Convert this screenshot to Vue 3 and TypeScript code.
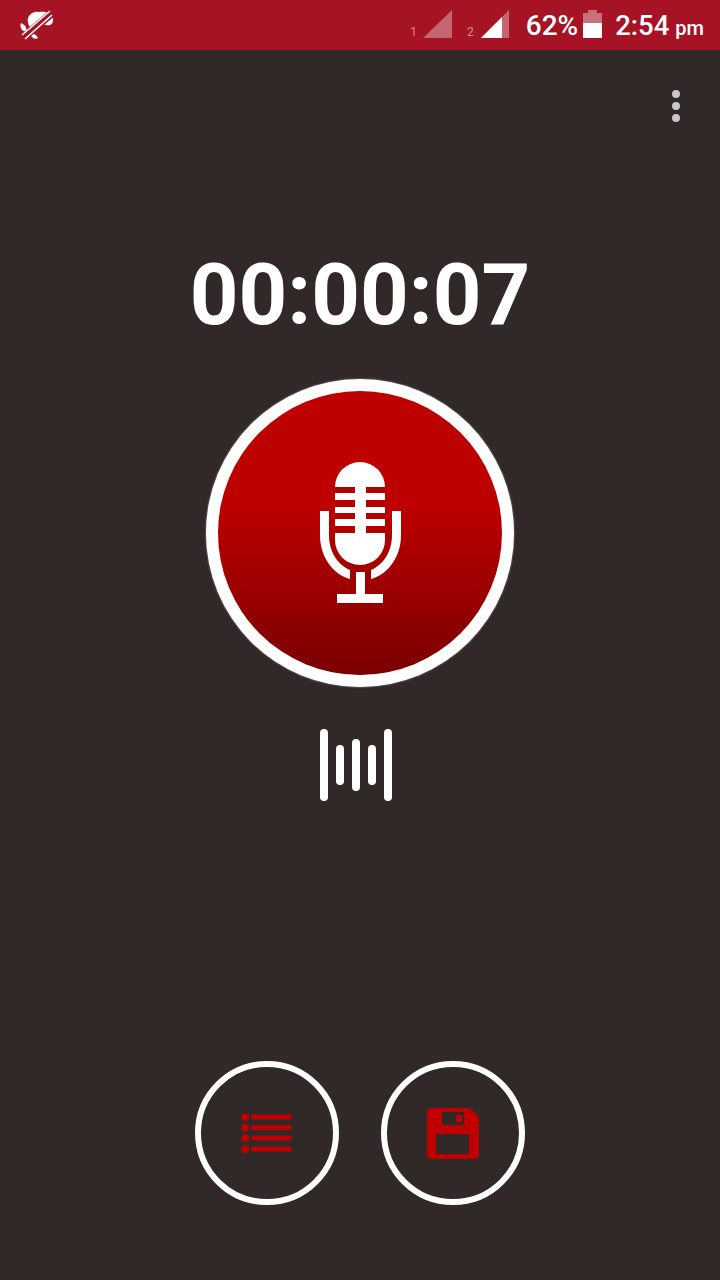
<script setup lang="ts">
const bars = [72, 40, 52, 40, 72]
</script>

<template>
  <div class="screen">
    <div class="status-bar">
      <svg class="mute-icon" width="40" height="40" viewBox="0 0 40 40">
        <path d="M9 12 C11 7 16 5 20 6 C25 5 31 6 33 10 C35 14 34 18 31 19 C28 20 26 18 24 19 C20 22 16 24 13 23 C10 21 8 16 9 12 Z" fill="#fff" />
        <path d="M2 17 C5 18 8 21 8 26 C4 26 0 22 2 17 Z M11 27 C14 27 18 29 19 32 C16 34 12 32 11 27 Z" fill="#fff" />
        <path d="M33 7 L4 32" stroke="#a51324" stroke-width="8" />
        <path d="M31 5 L3 29 M33 9 L6 33" stroke="#fff" stroke-width="1.6" />
      </svg>
      <div class="status-right">
        <span class="sim">1</span>
        <svg class="signal" width="29" height="28" viewBox="0 0 29 28">
          <path d="M0 28 L29 0 V28 Z" fill="#fff" opacity="0.35" />
        </svg>
        <span class="sim sim-two">2</span>
        <svg class="signal" width="28" height="28" viewBox="0 0 28 28">
          <path d="M0 28 L28 0 V28 Z" fill="#fff" opacity="0.35" />
          <path d="M0 28 L21 7 V28 Z" fill="#fff" />
        </svg>
        <span class="percent">62%</span>
        <svg class="battery" width="19" height="28" viewBox="0 0 19 28">
          <path d="M5 0 H14 V3 H19 V13 H0 V3 H5 Z" fill="#fff" opacity="0.4" />
          <rect x="0" y="13" width="19" height="15" fill="#fff" />
        </svg>
        <span class="clock">2:54<small>pm</small></span>
      </div>
    </div>

    <div class="menu-row">
      <div class="menu-dots">
        <i></i><i></i><i></i>
      </div>
    </div>

    <div class="timer">00:00:07</div>

    <div class="record-ring">
      <div class="record-btn">
        <svg width="82" height="142" viewBox="-1 0 82 142">
          <rect x="15" y="0" width="50" height="103" rx="25" fill="#fff" />
          <g fill="#b50000">
            <rect x="15" y="25" width="20" height="6" />
            <rect x="46" y="25" width="19" height="6" />
            <rect x="15" y="38" width="20" height="7" />
            <rect x="46" y="38" width="19" height="7" />
            <rect x="15" y="51" width="20" height="6" />
            <rect x="46" y="51" width="19" height="6" />
            <rect x="15" y="64" width="20" height="7" />
            <rect x="46" y="64" width="19" height="7" />
          </g>
          <path d="M0 49 H9 V73 C9 90 18 103 30 108 V117 C12 112 0 94 0 73 Z" fill="#fff" />
          <path d="M81 49 H72 V73 C72 90 63 103 51 108 V117 C69 112 81 94 81 73 Z" fill="#fff" />
          <rect x="36" y="110" width="9" height="23" fill="#fff" />
          <rect x="17" y="132" width="46" height="9" fill="#fff" />
        </svg>
      </div>
    </div>

    <div class="bars">
      <span v-for="(h, i) in bars" :key="i" class="bar" :style="{ height: h + 'px' }"></span>
    </div>

    <div class="actions">
      <div class="round-btn">
        <svg width="52" height="40" viewBox="0 0 52 40">
          <g fill="#c00000">
            <rect x="0.5" y="0.5" width="7.5" height="7.5" rx="3" />
            <rect x="0.5" y="11" width="7.5" height="7.5" rx="3" />
            <rect x="0.5" y="21.5" width="7.5" height="7.5" rx="3" />
            <rect x="0.5" y="32.5" width="7.5" height="7.5" rx="3" />
            <rect x="10" y="1.5" width="41" height="5" rx="2" />
            <rect x="10" y="12" width="41" height="5" rx="2" />
            <rect x="10" y="22.5" width="41" height="5" rx="2" />
            <rect x="10" y="33.5" width="41" height="5" rx="2" />
          </g>
        </svg>
      </div>
      <div class="round-btn">
        <svg width="52" height="51" viewBox="0 0 52 51">
          <path fill="#c00000" fill-rule="evenodd" d="M4 0 H42 C47 3 50 6 52 10 V47 C52 49 50 51 48 51 H4 C2 51 0 49 0 47 V4 C0 2 2 0 4 0 Z M15 4 V17 H37 V4 Z M9 26 V46 H42 V26 Z" />
          <rect x="29" y="7" width="6" height="7" fill="#c00000" />
        </svg>
      </div>
    </div>
  </div>
</template>

<style scoped>
.screen {
  width: 720px;
  height: 1280px;
  background: #312828;
  display: flex;
  flex-direction: column;
  align-items: center;
  font-family: Roboto, "Liberation Sans", sans-serif;
  color: #fff;
  overflow: hidden;
}

.status-bar {
  width: 100%;
  height: 50px;
  background: #a51324;
  display: flex;
  align-items: center;
  justify-content: space-between;
  box-sizing: border-box;
  padding: 0 16px 0 19px;
}
.mute-icon {
  display: block;
  margin-top: 2px;
}
.status-right {
  display: flex;
  align-items: flex-end;
  height: 28px;
  margin-top: -2px;
}
.sim {
  font-size: 12px;
  line-height: 12px;
  color: rgba(255, 255, 255, 0.5);
  margin-right: 6px;
}
.sim-two {
  margin-left: 15px;
  margin-right: 7px;
}
.signal,
.battery {
  display: block;
}
.percent {
  font-size: 28px;
  font-weight: 500;
  line-height: 28px;
  margin: 0 5px -2px 17px;
}
.clock {
  font-size: 27.5px;
  font-weight: 500;
  line-height: 28px;
  margin: 0 0 -2px 13px;
  white-space: nowrap;
}
.clock small {
  font-size: 20px;
  line-height: 1;
  margin-left: 6px;
}

.menu-row {
  width: 100%;
  display: flex;
  justify-content: flex-end;
  box-sizing: border-box;
  padding: 40px 40px 0 0;
}
.menu-dots {
  display: flex;
  flex-direction: column;
  gap: 4px;
}
.menu-dots i {
  display: block;
  width: 8px;
  height: 8px;
  border-radius: 50%;
  background: #c9c6c6;
}

.timer {
  margin-top: 123px;
  font-size: 85px;
  font-weight: 700;
  line-height: 100px;
}

.record-ring {
  margin-top: 34px;
  width: 308px;
  height: 308px;
  box-sizing: border-box;
  border-radius: 50%;
  background: #fff;
  box-shadow: 0 0 2px rgba(255, 255, 255, 0.6);
  padding: 12px;
}
.record-btn {
  width: 100%;
  height: 100%;
  border-radius: 50%;
  background: linear-gradient(to bottom, #bd0000 0%, #bd0000 40%, #7a0000 100%);
  display: flex;
  align-items: center;
  justify-content: center;
}
.record-btn svg {
  display: block;
}

.bars {
  margin-top: 42px;
  margin-right: 8px;
  height: 72px;
  display: flex;
  align-items: center;
  gap: 8px;
}
.bar {
  display: block;
  width: 8px;
  border-radius: 4px;
  background: #fff;
}

.actions {
  margin-top: 260px;
  display: flex;
  gap: 42px;
}
.round-btn {
  width: 144px;
  height: 144px;
  box-sizing: border-box;
  border: 6px solid #fff;
  border-radius: 50%;
  display: flex;
  align-items: center;
  justify-content: center;
}
.round-btn svg {
  display: block;
}
</style>

<style>
body {
  margin: 0;
  background: #312828;
}
</style>
